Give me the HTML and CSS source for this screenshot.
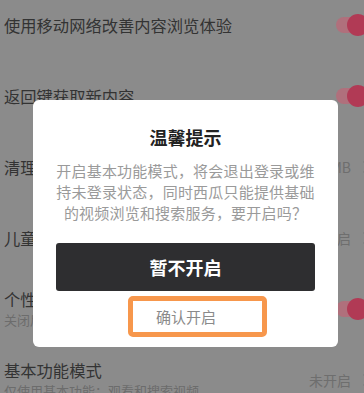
FILE: index.html
```html
<!DOCTYPE html>
<html lang="zh-CN">
<head>
    <meta charset="UTF-8">
    <meta name="viewport" content="width=device-width, initial-scale=1.0">
    <title>设置</title>
    <link rel="stylesheet" href="styles.css">
</head>
<body>
    <div class="page">
        <div class="list">
            <div class="row">
                <div class="row-text"><div class="title">使用移动网络改善内容浏览体验</div></div>
                <div class="switch on"><span class="knob"></span></div>
            </div>
            <div class="row">
                <div class="row-text"><div class="title">返回键获取新内容</div></div>
                <div class="switch on"><span class="knob"></span></div>
            </div>
            <div class="row">
                <div class="row-text"><div class="title">清理缓存</div></div>
                <div class="value">12.6MB<span class="arrow"></span></div>
            </div>
            <div class="row">
                <div class="row-text"><div class="title">儿童模式</div></div>
                <div class="value">未开启<span class="arrow"></span></div>
            </div>
            <div class="row">
                <div class="row-text">
                    <div class="title">个性化推荐</div>
                    <div class="sub">关闭后将不再推荐个性化内容</div>
                </div>
                <div class="switch on"><span class="knob"></span></div>
            </div>
            <div class="row">
                <div class="row-text">
                    <div class="title">基本功能模式</div>
                    <div class="sub">仅使用基本功能：观看和搜索视频</div>
                </div>
                <div class="value">未开启<span class="arrow"></span></div>
            </div>
        </div>
    </div>

    <div class="dialog">
        <h2 class="dialog-title">温馨提示</h2>
        <p class="dialog-text">开启基本功能模式，将会退出登录或维<br>持未登录状态，同时西瓜只能提供基础<br>的视频浏览和搜索服务，要开启吗？</p>
        <button class="btn-cancel">暂不开启</button>
        <div class="confirm-wrap">
            <button class="btn-confirm">确认开启</button>
        </div>
    </div>
</body>
</html>
```

FILE: styles.css
```css
html, body {
    margin: 0;
    padding: 0;
}
body {
    width: 364px;
    height: 393px;
    overflow: hidden;
    position: relative;
    background-color: #8b8b8b;
    font-family: "Noto Sans CJK SC", "Noto Sans", sans-serif;
}
.page {
    height: 100%;
    overflow: hidden;
}
.list {
    margin-top: -11px;
}
.row {
    height: 71px;
    display: flex;
    align-items: center;
    padding-left: 4px;
    box-sizing: border-box;
}
.row-text {
    flex: 1;
    min-width: 0;
}
.title {
    font-size: 16.3px;
    line-height: 22px;
    color: #333;
    white-space: nowrap;
}
.sub {
    font-size: 13px;
    line-height: 20px;
    color: #6c6c6c;
    white-space: nowrap;
}
.switch {
    position: relative;
    width: 38px;
    height: 16px;
    margin-right: -10px;
    border-radius: 8px;
    background-color: #b0707c;
}
.knob {
    position: absolute;
    right: 5px;
    top: -3px;
    width: 22px;
    height: 22px;
    border-radius: 50%;
    background-color: #b13a55;
}
.value {
    display: flex;
    align-items: center;
    font-size: 14px;
    color: #6e6e6e;
    margin-right: -4px;
}
.arrow {
    width: 7px;
    height: 7px;
    margin-left: 9px;
    border-top: 1.5px solid #6e6e6e;
    border-right: 1.5px solid #6e6e6e;
    transform: rotate(45deg);
}

.dialog {
    position: absolute;
    left: 33px;
    top: 100px;
    width: 305px;
    height: 247px;
    box-sizing: border-box;
    padding: 24px 23px 0;
    background-color: #fff;
    border-radius: 6px;
    text-align: center;
}
.dialog-title {
    margin: 0;
    font-size: 18px;
    line-height: 26px;
    font-weight: bold;
    color: #222;
}
.dialog-text {
    margin: 10px 0 0;
    font-size: 15px;
    line-height: 21px;
    letter-spacing: 0.2px;
    color: #9a9a9a;
    white-space: nowrap;
}
.btn-cancel {
    display: block;
    width: 100%;
    height: 48px;
    margin-top: 20px;
    border: none;
    border-radius: 3px;
    background-color: #2e2e30;
    color: #fff;
    font-family: inherit;
    font-size: 18px;
    font-weight: bold;
}
.confirm-wrap {
    display: flex;
    justify-content: center;
    margin-top: 5px;
}
.btn-confirm {
    width: 139px;
    height: 41px;
    margin-left: 24px;
    padding: 0 46px 0 23px;
    border: 5px solid #f7974c;
    border-radius: 5px;
    background-color: #fff;
    color: #8a8a8a;
    font-family: inherit;
    font-size: 15px;
    text-align: center;
}
```
